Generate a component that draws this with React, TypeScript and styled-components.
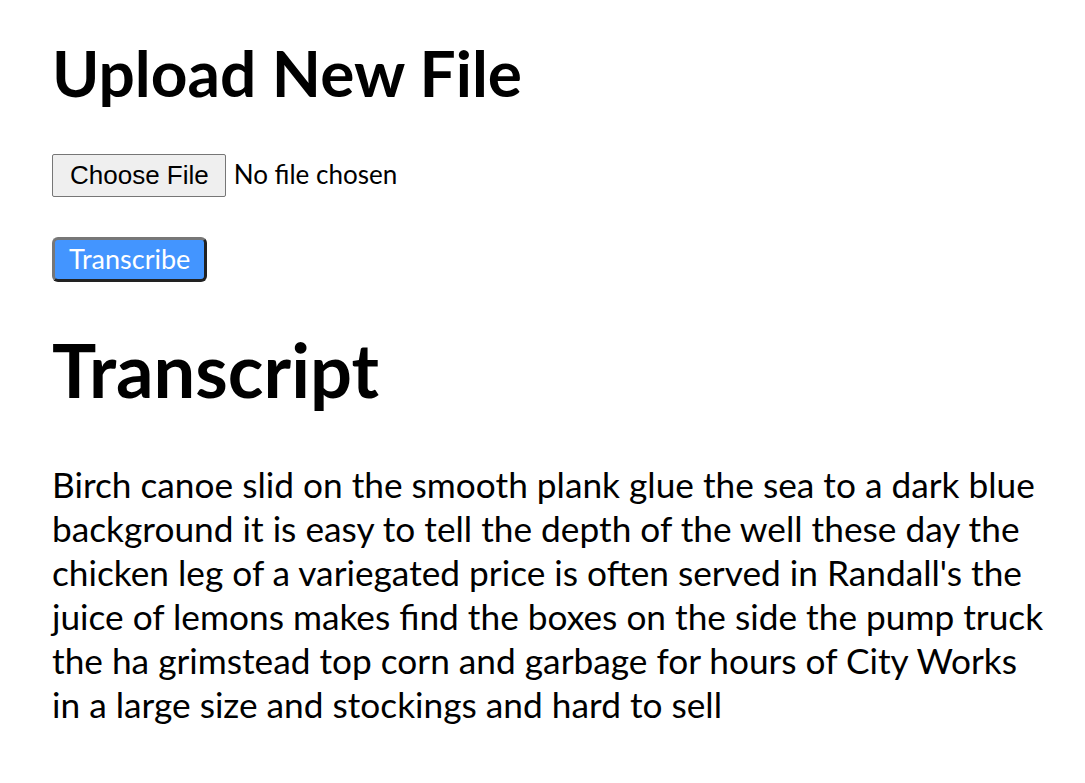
import { FC } from "react";
import styled, { createGlobalStyle } from "styled-components";

const GlobalStyle = createGlobalStyle`
  body {
    margin: 0;
    padding: 35px 38px 0 52px;
    font-family: Lato, "Noto Sans", sans-serif;
    color: #000;
    background: #fff;
  }
`;

const Heading = styled.h2`
  font-size: 64px;
  font-weight: 700;
  margin: 0 0 42px;
  line-height: 1.2;
`;

const UploadForm = styled.form`
  display: flex;
  flex-direction: column;
  align-items: flex-start;
  gap: 40px;
`;

const FileInput = styled.input`
  font-family: Lato, sans-serif;
  font-size: 26px;

  &::file-selector-button {
    font-family: "Liberation Sans", Arial, sans-serif;
    font-size: 26px;
    padding: 5px 16px 5px 17px;
    margin-right: 8px;
    background: #efefef;
    border: 1px solid #767676;
    border-radius: 2px;
  }
`;

const SubmitButton = styled.button`
  font-family: Lato, sans-serif;
  font-size: 27px;
  color: #fff;
  background: #4395ff;
  border: 3px solid;
  border-color: #777 #222 #222 #777;
  border-radius: 6px;
  padding: 0 14px 1px;
  line-height: 1.4;
`;

const Title = styled.h1`
  font-size: 74px;
  font-weight: 700;
  margin: 44px 0 49px;
  line-height: 1.2;
`;

const Transcript = styled.p`
  font-size: 35.25px;
  line-height: 44px;
  margin: 0;
`;

const text =
  "Birch canoe slid on the smooth plank glue the sea to a dark blue background it is easy to tell the depth of the well these day the chicken leg of a variegated price is often served in Randall's the juice of lemons makes find the boxes on the side the pump truck the ha grimstead top corn and garbage for hours of City Works in a large size and stockings and hard to sell";

const App: FC = () => (
  <>
    <GlobalStyle />
    <Heading>Upload New File</Heading>
    <UploadForm onSubmit={(e) => e.preventDefault()}>
      <FileInput type="file" />
      <SubmitButton type="submit">Transcribe</SubmitButton>
    </UploadForm>
    <Title>Transcript</Title>
    <Transcript>{text}</Transcript>
  </>
);

export default App;
